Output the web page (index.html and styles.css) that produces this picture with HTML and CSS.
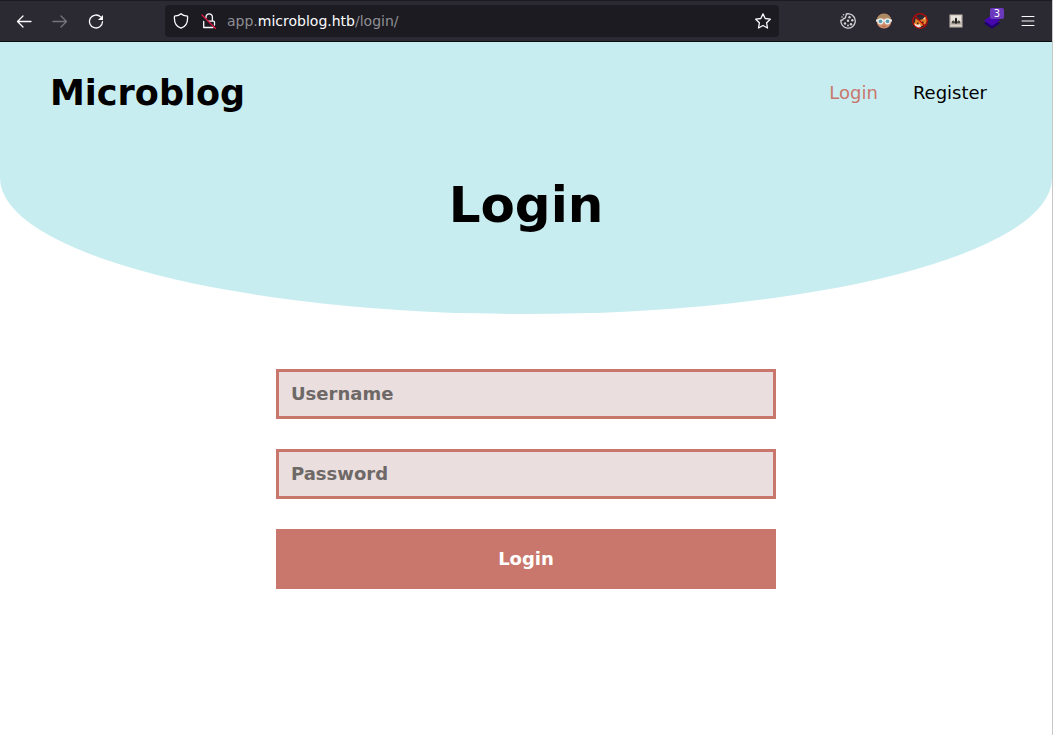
FILE: index.html
```html
<!DOCTYPE html>
<html lang="en">
<head>
<meta charset="utf-8">
<title>Microblog - Login</title>
<link rel="stylesheet" href="styles.css">
</head>
<body>
<div class="window">
  <div class="toolbar">
    <div class="tools">
      <button class="tool" type="button" aria-label="Back"><svg class="icon" viewBox="0 0 16 16"><path d="M15 8.500H1.500M7 3L1.500 8.500L7 14"/></svg></button>
      <button class="tool tool-off" type="button" aria-label="Forward" disabled><svg class="icon" viewBox="0 0 16 16"><path d="M1 8.500H14.500M9 3L14.500 8.500L9 14"/></svg></button>
      <button class="tool" type="button" aria-label="Reload"><svg class="icon" viewBox="0 0 16 16"><path d="M12.600 3.900A6.500 6.500 0 1 0 14.500 8.700"/><path class="solid" d="M15 2v5H10z"/></svg></button>
    </div>
    <div class="address">
      <button class="site-info" type="button" aria-label="Tracking protection"><svg class="icon" viewBox="0 0 16 16"><path d="M8 .8C6.500 2.400 4 3 1.500 3.200C1 8.500 3 13.500 8 15.200C13 13.500 15 8.500 14.500 3.200C12 3 9.500 2.400 8 .8z"/></svg></button>
      <button class="site-info" type="button" aria-label="Connection not secure"><svg class="icon" viewBox="0 0 16 16"><path d="M5 4.800V4a3.200 3.200 0 0 1 6.400 0v4M7.500 8.200h5q1 0 1 1V12M2.700 8.500V14.500H12"/><path class="strike" d="M1 2L14.500 15.500"/></svg></button>
      <div class="url"><span>app.</span><span class="domain">microblog.htb</span><span>/login/</span></div>
      <button class="star" type="button" aria-label="Bookmark this page"><svg class="icon" viewBox="0 0 16 16"><path d="M8 .9L10.200 5.500L15.300 6.200L11.600 9.800L12.500 15L8 12.500L3.500 15L4.400 9.800L.7 6.200L5.800 5.500z"/></svg></button>
    </div>
    <div class="tools">
      <button class="tool" type="button" aria-label="Cookie editor"><svg class="icon cookie" viewBox="0 0 16 16"><path d="M6.200 1Q8 .6 9.200 .9A7.200 7.200 0 1 1 .9 7.200Q3 7.500 3.500 5.500Q6 5.500 5.500 3.500Q6.500 2.500 6.200 1z"/><g class="solid"><circle cx="9.500" cy="4.200" r="1.200"/><circle cx="12.300" cy="7.300" r="1.200"/><circle cx="8" cy="7.800" r="1.200"/><circle cx="5" cy="10.500" r="1.200"/><circle cx="11" cy="11.200" r="1.200"/><circle cx="8" cy="12.600" r="1"/><circle cx="2" cy="4" r=".8"/><circle cx="3.500" cy="1.800" r=".8"/></g></svg></button>
      <button class="tool" type="button" aria-label="User agent switcher"><svg class="face" viewBox="0 0 16 16"><circle cx="8" cy="8" r="7.500" fill="#cf8d6c"/><path d="M.8 6.500A7.500 7.500 0 0 1 15.200 6.500L11 4.500L5 5z" fill="#a98b62"/><path d="M0 7.500h16" stroke="#e6eef0" stroke-width="2"/><circle cx="4.500" cy="8.300" r="2.500" fill="#5b9bae" stroke="#edf3f4" stroke-width="1.200"/><circle cx="11.500" cy="8.300" r="2.500" fill="#5b9bae" stroke="#edf3f4" stroke-width="1.200"/><path d="M6.500 13.300h3" stroke="#ad5e43"/></svg></button>
      <button class="tool" type="button" aria-label="Proxy off"><svg class="face" viewBox="0 0 16 16"><path d="M3.500 5.500L6.500 7.500L11 6L14 2.500L15.300 7L13.500 11L10 13L6 14.500L1.500 11.500L3 9z" fill="#e2812b"/><path d="M2.500 10.500L5.500 12L8 11L9 14L6 15L3 13.500z" fill="#e8dfda"/><path d="M11 6L13.500 3.500L13 6.500z" fill="#f4d5b0"/><path d="M5 9.500h1.500V11H5zM10 8.500h1.500V10H10z" fill="#43261c"/><circle cx="8" cy="8" r="7.300" fill="none" stroke="#bc0808" stroke-width="1.200"/><path d="M3 3L13 13" stroke="#bc0808" stroke-width="1.300"/></svg></button>
      <button class="tool" type="button" aria-label="Extension"><svg class="face" viewBox="0 0 16 16"><path d="M1.500 1.500h13v13h-13z" fill="#c4bab2"/><path d="M3 2.500h10v8H3z" fill="#e9e3dd"/><path d="M3.500 10.500Q3.500 7 6 7.500L7 9V5.500L8 4.500L9 5.500V9L10 7.500Q12.500 7 12.500 10.500z" fill="#4a4641"/><path d="M7 5.500h2v5H7z" fill="#23211f"/><path d="M2.500 12.500h11" stroke="#ddd5cd"/></svg></button>
      <button class="tool" type="button" aria-label="Wappalyzer, 3 technologies"><svg class="face" viewBox="0 0 16 16"><path d="M8 5.500L16 10.500L8 15.800L0 10.500z" fill="#210071"/><path d="M8 2L16 7.500L8 13L0 7.500z" fill="#4608ae"/></svg><span class="badge">3</span></button>
      <button class="tool" type="button" aria-label="Menu"><svg class="icon menu" viewBox="0 0 16 16"><path d="M2 3.500h12M2 8h12M2 12.500h12"/></svg></button>
    </div>
  </div>

  <header class="hero">
    <div class="topbar">
      <div class="brand">Microblog</div>
      <nav class="nav">
        <a class="current" href="#login" aria-current="page">Login</a>
        <a href="#register">Register</a>
      </nav>
    </div>
    <h1 class="title">Login</h1>
  </header>

  <main>
    <form class="form" id="login">
      <input class="field" type="text" name="username" placeholder="Username" aria-label="Username">
      <input class="field" type="password" name="password" placeholder="Password" aria-label="Password">
      <button class="submit" type="submit">Login</button>
    </form>
  </main>
</div>
</body>
</html>
```

FILE: styles.css
```css
* {
  box-sizing: border-box;
}

body {
  margin: 0;
  background: #fff;
  color: #000;
  font-family: "DejaVu Sans", sans-serif;
  font-size: 18px;
}

button {
  margin: 0;
  padding: 0;
  border: 0;
  background: none;
  font: inherit;
}

.window {
  min-height: 100vh;
  border-right: 1px solid #c8c8c8;
}

.toolbar {
  display: flex;
  align-items: center;
  gap: 51px;
  height: 42px;
  padding: 0 6px;
  background: #2b2a33;
  border-top: 1px solid #1c1b22;
  border-bottom: 1px solid #0c0c0d;
}

.tools {
  display: flex;
}

.tool {
  position: relative;
  display: flex;
  align-items: center;
  justify-content: center;
  width: 36px;
  height: 32px;
}

.icon,
.face {
  display: block;
  width: 16px;
  height: 16px;
}

.icon {
  fill: none;
  stroke: #fbfbfe;
  stroke-width: 1.3;
  stroke-linecap: round;
  stroke-linejoin: round;
}

.icon .solid {
  fill: #fbfbfe;
  stroke: none;
}

.icon .strike {
  stroke: #e2143f;
}

.cookie {
  stroke: #d2d2d6;
}

.cookie .solid {
  fill: #d2d2d6;
}

.menu {
  stroke-width: 1;
}

.tool-off .icon {
  stroke: #76757c;
}

.badge {
  position: absolute;
  top: 3px;
  right: 6px;
  width: 14px;
  height: 11px;
  border-radius: 2px;
  background: #6b39bd;
  color: #fff;
  font-size: 10px;
  line-height: 11px;
  text-align: center;
}

.address {
  display: flex;
  flex: 1;
  align-items: center;
  gap: 12px;
  min-width: 0;
  height: 32px;
  padding: 0 8px;
  border-radius: 4px;
  background: #1c1b22;
}

.url {
  flex: 1;
  margin-left: -2px;
  color: #8f8f95;
  font-size: 14px;
  white-space: nowrap;
}

.domain {
  color: #fbfbfe;
}

.hero {
  padding: 30px 50px 79px;
  border-radius: 0 0 50% 50%;
  background: #c8edf0;
}

.topbar {
  display: flex;
  align-items: center;
  justify-content: space-between;
  padding-right: 15px;
}

.brand {
  font-size: 35px;
  font-weight: bold;
  line-height: 42px;
}

.nav {
  display: flex;
  gap: 35px;
  padding-bottom: 2px;
}

.nav a {
  color: #000;
  text-decoration: none;
}

.nav .current {
  color: #c9776c;
}

.title {
  margin: 61px 0 0;
  font-size: 50px;
  line-height: 60px;
  text-align: center;
}

.form {
  display: flex;
  flex-direction: column;
  gap: 30px;
  width: 100%;
  max-width: 500px;
  margin: 55px auto;
}

.field {
  height: 50px;
  padding: 0 12px 2px;
  border: 3px solid #c9776c;
  border-radius: 0;
  background: #eadfde;
  color: #000;
  font: bold 18px "DejaVu Sans", sans-serif;
}

.field::placeholder {
  color: #6e6867;
}

.submit {
  height: 60px;
  padding-bottom: 2px;
  background: #c9776c;
  color: #fff;
  font-weight: bold;
}
```
